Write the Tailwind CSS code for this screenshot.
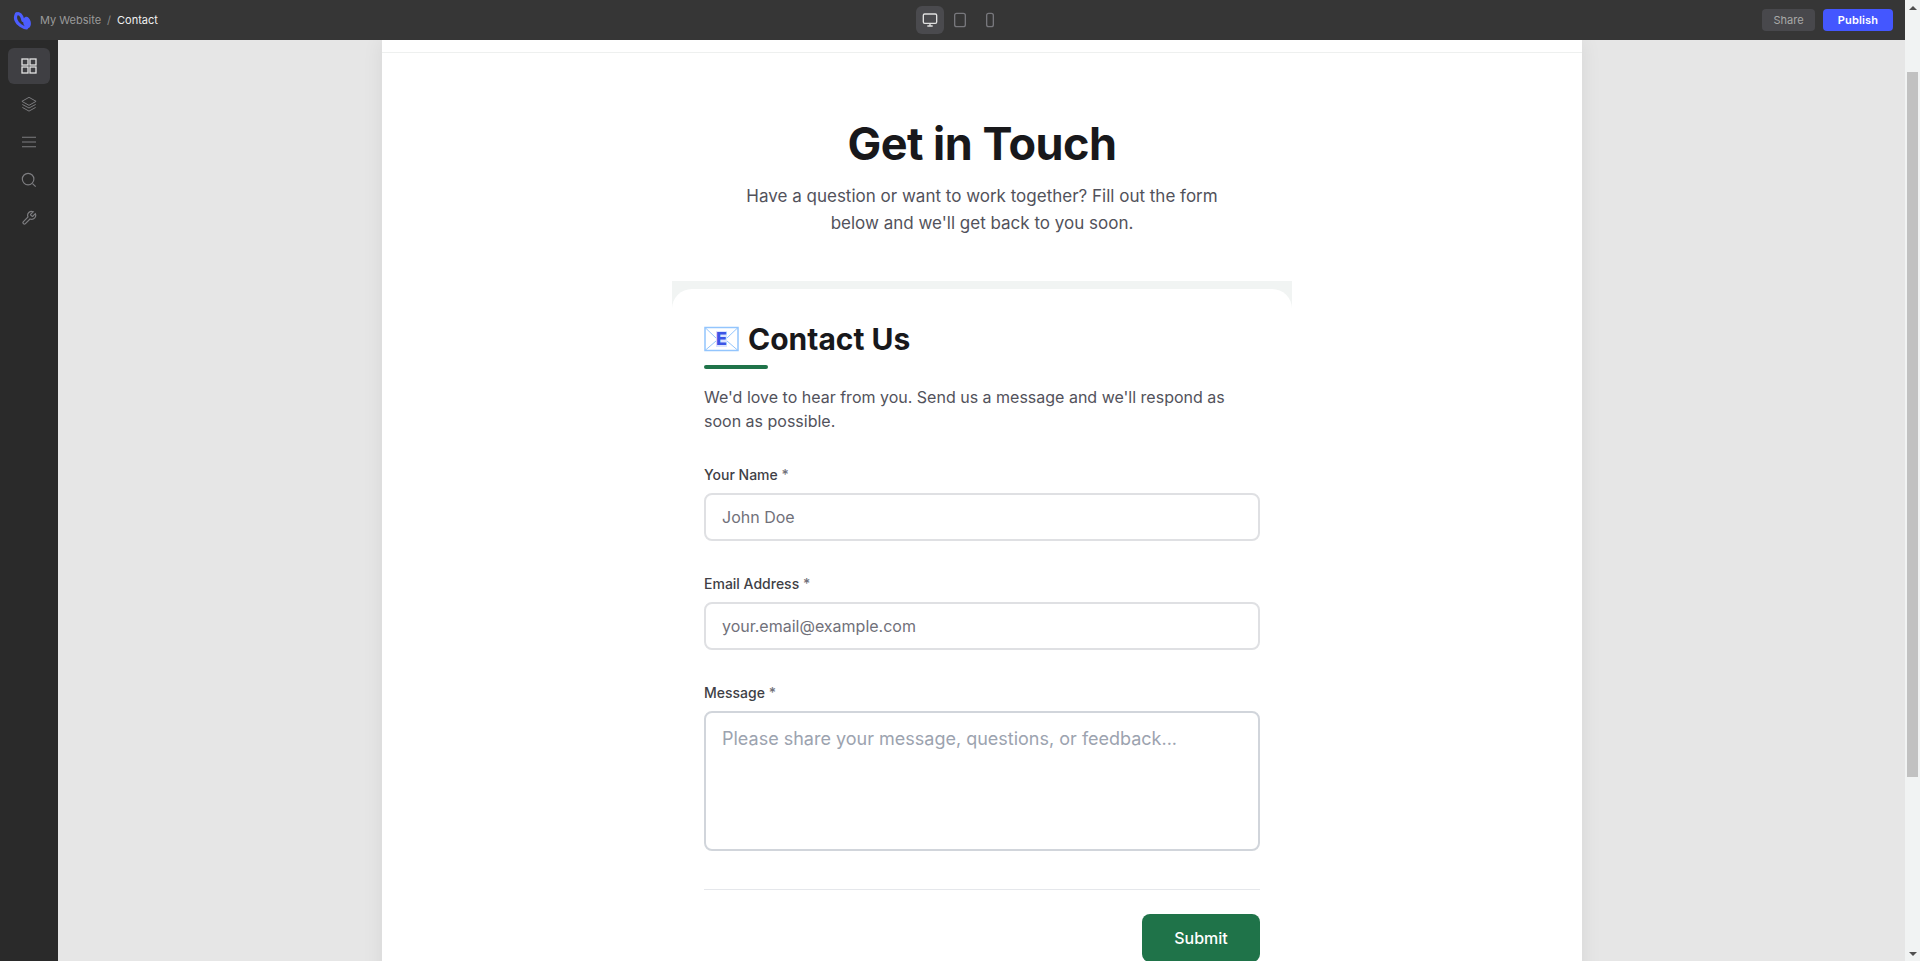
<!DOCTYPE html>
<html lang="en">

<head>
  <meta charset="UTF-8">
  <meta name="viewport" content="width=device-width, initial-scale=1.0">
  <title>Contact</title>
  <script src="https://cdn.jsdelivr.net/npm/@tailwindcss/browser@4"></script>
</head>

<body class="h-screen overflow-hidden bg-[#e6e6e6] font-['Inter',sans-serif] antialiased">
  <div class="flex h-[961px] w-full">
    <div class="flex h-full min-w-0 flex-1 flex-col">
      <!-- top bar -->
      <header class="relative z-10 flex h-10 shrink-0 items-center justify-between bg-[#363636] pl-[13px] pr-[12px]">
        <div class="flex items-center">
          <svg class="h-[19px] w-[19px]" viewBox="0 0 19 19" fill="none">
            <path d="M3.500 3C1 7 3.500 12 7.500 14.500 9.500 15.800 11.500 17 13.500 17" stroke="#4c5dff" stroke-width="3.200" stroke-linecap="round"/>
            <path d="M3.500 3C6 1.500 9 4 10 9.500" stroke="#4c5dff" stroke-width="3.200" stroke-linecap="round"/>
            <ellipse cx="14" cy="11.500" rx="3.800" ry="5.800" transform="rotate(-12 14 11.500)" fill="#4c5dff"/>
          </svg>
          <span class="ml-[8px] text-[11px] text-[#9a9a9a]">My Website</span>
          <span class="mx-[6px] text-[11px] text-[#8a8a8a]">/</span>
          <span class="text-[11px] text-[#f0f0f0]">Contact</span>
        </div>
        <div class="absolute left-[916px] top-[6px] flex items-center">
          <div class="flex h-7 w-7 items-center justify-center rounded-md bg-[#4a4a4e]">
            <svg class="h-4 w-4" viewBox="0 0 24 24" fill="none" stroke="#e0e0e0" stroke-width="2"><rect x="2" y="3" width="20" height="14" rx="2"/><path d="M8 21h8M12 17v4"/></svg>
          </div>
          <div class="ml-[2px] flex h-7 w-7 items-center justify-center">
            <svg class="h-4 w-4" viewBox="0 0 24 24" fill="none" stroke="#77777c" stroke-width="2"><rect x="4" y="2" width="16" height="20" rx="3"/></svg>
          </div>
          <div class="ml-[2px] flex h-7 w-7 items-center justify-center">
            <svg class="h-4 w-4" viewBox="0 0 24 24" fill="none" stroke="#77777c" stroke-width="2"><rect x="7" y="2" width="10" height="20" rx="3"/></svg>
          </div>
        </div>
        <div class="flex items-center gap-[8px]">
          <div class="flex h-[22px] w-[53px] items-center justify-center rounded bg-[#48484c] text-[11px] text-[#a8a8a8]">Share</div>
          <div class="flex h-[22px] w-[70px] items-center justify-center rounded bg-[#4457ff] text-[11px] font-semibold tracking-[0.2px] text-white">Publish</div>
        </div>
      </header>

      <div class="flex min-h-0 flex-1">
        <!-- side rail -->
        <nav class="relative z-10 flex w-[58px] shrink-0 flex-col items-center bg-[#2a2a2a] pt-[8px]">
          <div class="flex h-9 w-[42px] items-center justify-center rounded-md bg-[#3f3f43]">
            <svg class="h-4 w-4" viewBox="0 0 16 16" fill="none" stroke="#e4e4e4" stroke-width="1.300"><rect x="1" y="1" width="6" height="6"/><rect x="9" y="1" width="6" height="6"/><rect x="1" y="9" width="6" height="6"/><rect x="9" y="9" width="6" height="6"/></svg>
          </div>
          <div class="mt-[2px] flex h-9 w-[42px] items-center justify-center">
            <svg class="h-4 w-4" viewBox="0 0 18 18" fill="none" stroke="#7d7d80" stroke-width="1.100"><path d="M9 1.500 17 6l-8 4.500L1 6Z"/><path d="M1.500 9.500 9 13.500l7.500-4M1.500 12.800 9 17l7.500-4.200"/></svg>
          </div>
          <div class="mt-[2px] flex h-9 w-[42px] items-center justify-center">
            <svg class="h-4 w-4" viewBox="0 0 16 16" fill="none" stroke="#7d7d80" stroke-width="1.100"><path d="M1 3.300h14M1 8h14M1 12.700h14"/></svg>
          </div>
          <div class="mt-[2px] flex h-9 w-[42px] items-center justify-center">
            <svg class="h-4 w-4" viewBox="0 0 18 18" fill="none" stroke="#7d7d80" stroke-width="1.300"><circle cx="8" cy="8" r="6.500"/><path d="m13 13 3.500 3.500"/></svg>
          </div>
          <div class="mt-[2px] flex h-9 w-[42px] items-center justify-center">
            <svg class="h-4 w-4" viewBox="0 0 24 24" fill="none" stroke="#7d7d80" stroke-width="1.800"><path d="M14.700 6.300a1 1 0 0 0 0 1.400l1.600 1.600a1 1 0 0 0 1.400 0l3.770-3.770a6 6 0 0 1-7.940 7.940l-6.910 6.910a2.120 2.120 0 0 1-3-3l6.910-6.910a6 6 0 0 1 7.940-7.940l-3.760 3.760z"/></svg>
          </div>
        </nav>

        <!-- canvas -->
        <main class="flex min-w-0 flex-1 justify-center overflow-hidden pl-[1px]">
          <div class="h-[1400px] w-[1200px] shrink-0 bg-white shadow-[0_0_20px_rgba(0,0,0,0.07)]">
            <div class="h-[13px] border-b border-[#eef0ef]"></div>
            <div class="flex flex-col items-center pt-[64px]">
              <h1 class="text-[45px] font-bold leading-[54px] tracking-[-0.5px] text-[#18181b]">Get in Touch</h1>
              <p class="mt-[12px] w-[500px] text-center text-[17px] leading-[27px] text-[#52525b]">Have a question or want to work together? Fill out the form below and we'll get back to you soon.</p>
            </div>
            <div class="mx-auto mt-[44px] w-[620px] bg-[#f1f4f3] pt-[8px]">
              <div class="rounded-t-[20px] bg-white px-8 pt-[31px]">
                <h2 class="flex items-center text-[30px] font-bold leading-[38px] text-[#18181b]">
                  <svg class="mr-[8px] h-[26px] w-[36px]" viewBox="0 0 36 26" fill="none"><rect x="1" y="1.500" width="33" height="23" fill="#fff" stroke="#93c5fd" stroke-width="1.500"/><path d="M1 1.500 12 12M34 1.500 23 12M1 24.500 12 15M34 24.500 23 15" stroke="#93c5fd"/><rect x="12" y="5" width="11" height="16" fill="#dbe4ff"/><text x="17.500" y="19" text-anchor="middle" font-family="Inter" font-weight="800" font-size="18" fill="#3b55e6">E</text></svg>
                  Contact Us
                </h2>
                <div class="mt-[7px] h-1 w-16 rounded-full bg-[#1f7349]"></div>
                <p class="mt-[16px] text-[16px] leading-6 text-[#52525b]">We'd love to hear from you. Send us a message and we'll respond as soon as possible.</p>
                <form class="mt-[31px]">
                  <label class="block text-[14px] font-[450] leading-[21px] text-[#3f3f46]">Your Name <span class="text-[#71717a]">*</span></label>
                  <input class="mt-[8px] block h-12 w-full rounded-lg border-2 border-[#dfe0e3] bg-white px-4 text-[16px] text-[#3f3f46] placeholder:text-[#71717a]" placeholder="John Doe">
                  <label class="mt-[32px] block text-[14px] font-[450] leading-[21px] text-[#3f3f46]">Email Address <span class="text-[#71717a]">*</span></label>
                  <input class="mt-[8px] block h-12 w-full rounded-lg border-2 border-[#dfe0e3] bg-white px-4 text-[16px] text-[#3f3f46] placeholder:text-[#71717a]" placeholder="your.email@example.com">
                  <label class="mt-[32px] block text-[14px] font-[450] leading-[21px] text-[#3f3f46]">Message <span class="text-[#71717a]">*</span></label>
                  <textarea class="mt-[8px] block h-[140px] w-full resize-none rounded-lg border-2 border-[#d1d5db] bg-white px-4 py-[12px] text-[18px] leading-[27px] text-[#3f3f46] placeholder:text-[#9ca3af]" placeholder="Please share your message, questions, or feedback..."></textarea>
                  <div class="mt-[38px] flex justify-end border-t border-[#e5e7eb] pt-[24px]">
                    <button type="button" class="h-[48px] w-[118px] rounded-lg bg-[#1f7349] text-[16px] font-[450] text-white">Submit</button>
                  </div>
                </form>
              </div>
            </div>
          </div>
        </main>
      </div>
    </div>

    <!-- scrollbar -->
    <div class="flex h-full w-[15px] shrink-0 flex-col items-center bg-[#f1f3f3]">
      <div class="flex h-[15px] w-full items-center justify-center">
        <div class="h-0 w-0 border-x-[4px] border-b-[4px] border-x-transparent border-b-[#505050]"></div>
      </div>
      <div class="mt-[57px] h-[705px] w-[11px] bg-[#c1c1c1]"></div>
      <div class="flex-1"></div>
      <div class="flex h-[15px] w-full items-center justify-center">
        <div class="h-0 w-0 border-x-[4px] border-t-[4px] border-x-transparent border-t-[#505050]"></div>
      </div>
    </div>
  </div>
</body>

</html>
